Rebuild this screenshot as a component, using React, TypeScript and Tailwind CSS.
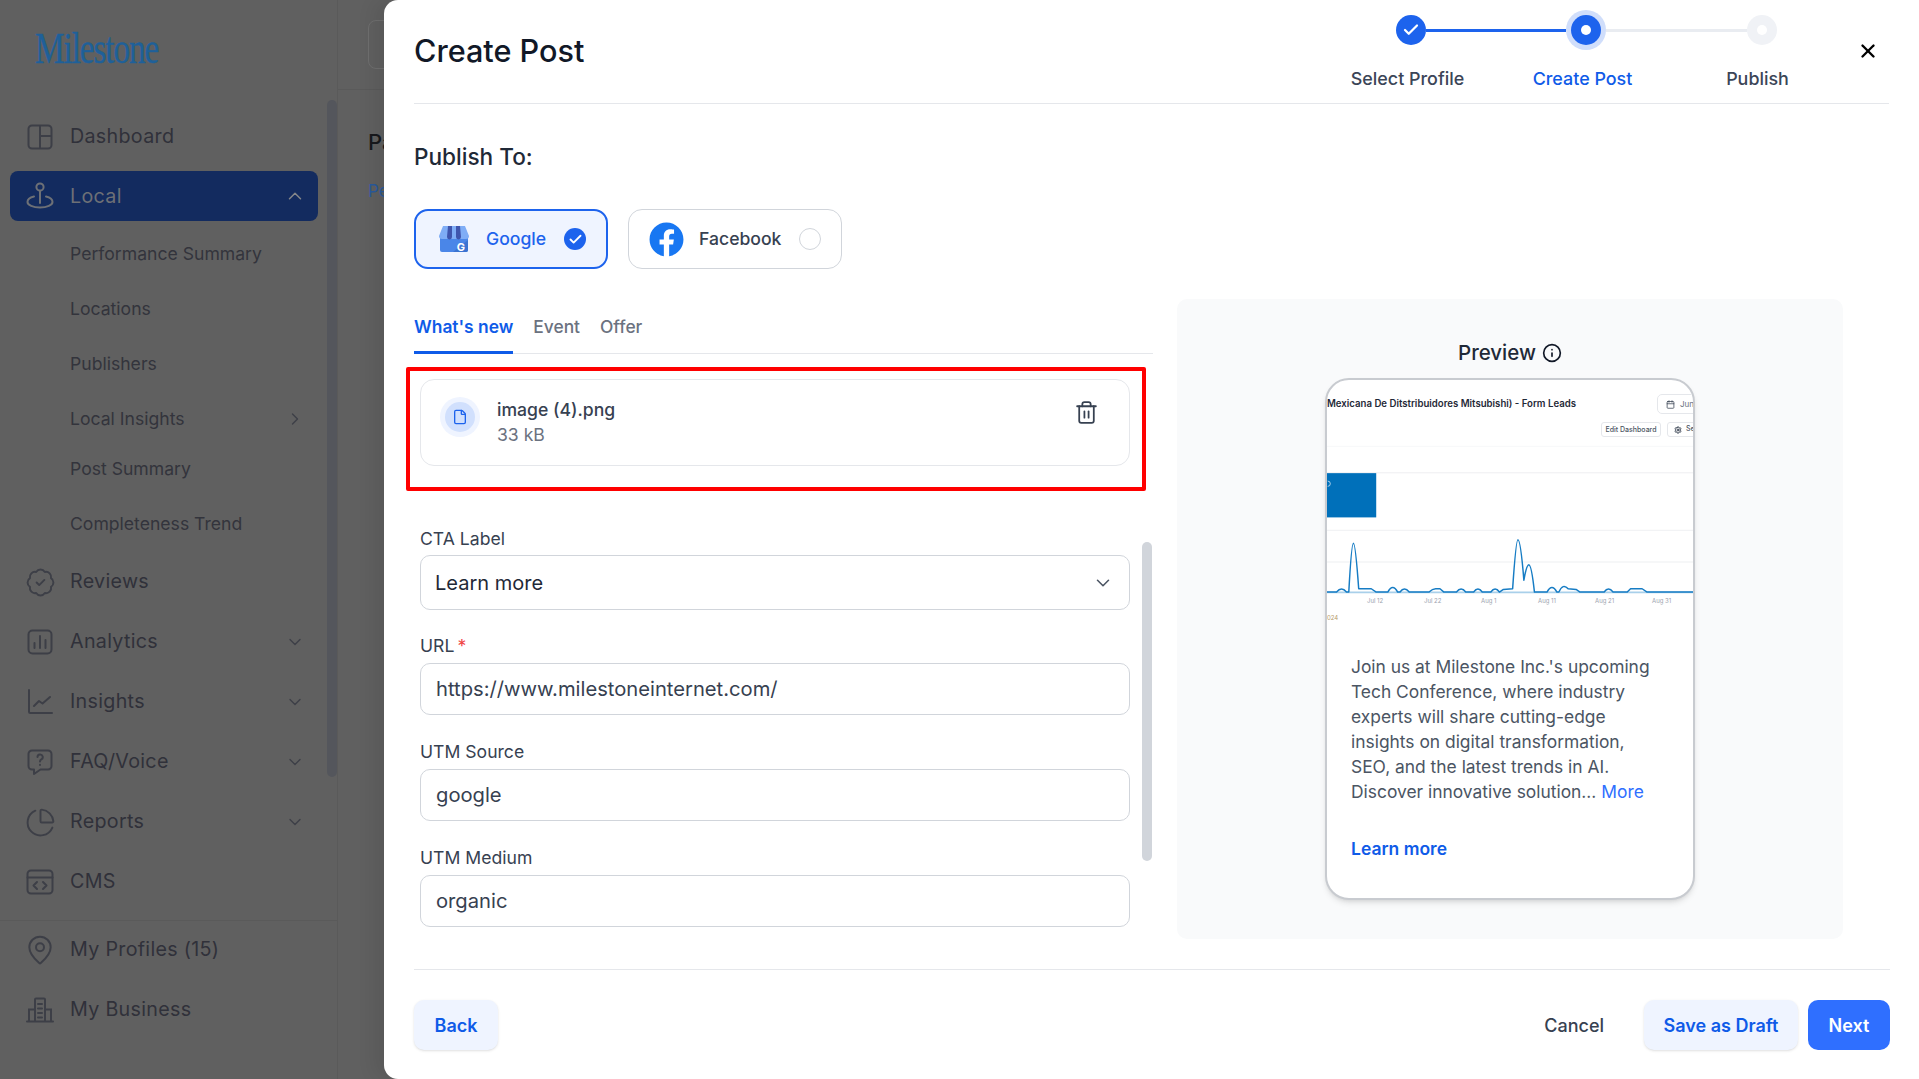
import { BadgeCheck, Calendar, Check, ChevronDown, ChevronRight, ChevronUp, ChartPie, File, Info, MapPin, Settings, Trash2, X } from "lucide-react";
import { FaFacebook } from "react-icons/fa";

const DashboardIcon = () => (
    <svg viewBox="0 0 26 26" className="w-[26px] h-[26px]" fill="none" stroke="currentColor" strokeWidth="2">
        <rect x="1.5" y="1.500" width="23" height="23" rx="3.5" />
        <path d="M13 1.500v23M13 12h11.5" />
    </svg>
);

const LocalIcon = () => (
    <svg viewBox="0 0 28 28" className="w-[28px] h-[28px]" fill="none" stroke="currentColor" strokeWidth="2" strokeLinecap="round">
        <circle cx="14" cy="5" r="3.6" />
        <path d="M14 9v12M8 14.500c-3.800.9-6.500 3-6.500 5.500 0 3 5.500 5.500 12.500 5.500s12.500-2.500 12.500-5.500c0-2.500-2.700-4.600-6.500-5.500" />
    </svg>
);

const AnalyticsIcon = () => (
    <svg viewBox="0 0 26 26" className="w-[26px] h-[26px]" fill="none" stroke="currentColor" strokeWidth="2" strokeLinecap="round">
        <rect x="1.500" y="1.500" width="23" height="23" rx="4" />
        <path d="M7.500 14v5M13 7v12M18.500 11v8" />
    </svg>
);

const InsightsIcon = () => (
    <svg viewBox="0 0 26 26" className="w-[26px] h-[26px]" fill="none" stroke="currentColor" strokeWidth="2" strokeLinecap="round" strokeLinejoin="round">
        <path d="M2 1v21.500c0 .8.500 1.500 1.500 1.500H25" />
        <path d="M7 17l5-5 3.500 2.500L23 8" />
    </svg>
);

const FaqIcon = () => (
    <svg viewBox="0 0 26 26" className="w-[26px] h-[26px]" fill="none" stroke="currentColor" strokeWidth="2" strokeLinecap="round" strokeLinejoin="round">
        <path d="M5 1.500h16a3.500 3.500 0 0 1 3.500 3.500v12a3.500 3.500 0 0 1-3.500 3.500h-7.500L7 25v-4.500H5A3.500 3.500 0 0 1 1.500 17V5A3.500 3.500 0 0 1 5 1.500z" />
        <path d="M10.500 8a2.600 2.600 0 1 1 3.800 2.400c-.9.500-1.300 1-1.300 2M13 15.800v.2" />
    </svg>
);

const CmsIcon = () => (
    <svg viewBox="0 0 28 26" className="w-[28px] h-[26px]" fill="none" stroke="currentColor" strokeWidth="2" strokeLinecap="round" strokeLinejoin="round">
        <rect x="1.500" y="1.500" width="25" height="23" rx="3.500" />
        <path d="M1.500 8.500h25M11 13l-3.500 3.500L11 20M17 13l3.500 3.500L17 20" />
    </svg>
);

const BusinessIcon = () => (
    <svg viewBox="0 0 28 26" className="w-[28px] h-[26px]" fill="none" stroke="currentColor" strokeWidth="2" strokeLinecap="round">
        <path d="M1 24.500h26M3 24.500V12.500h6M25 24.500V12.500h-6M9 24.500V2.500a1 1 0 0 1 1-1h8a1 1 0 0 1 1 1v22" />
        <path d="M12 7h4M12 11.500h4M12 16h4M12 20.500h4" />
    </svg>
);

const GmbIcon = () => (
    <svg viewBox="0 0 32 28" className="w-[32px] h-[28px]">
        <path d="M2 12h28v13a2 2 0 0 1-2 2H4a2 2 0 0 1-2-2z" fill="#4a86e8" />
        <path d="M15 27L30 15v10a2 2 0 0 1-2 2z" fill="#3b73d1" />
        <path d="M5 1h22l4 10a3 3 0 0 1-3 3H4a3 3 0 0 1-3-3z" fill="#7fadf6" />
        <path d="M10 1h4v11a2.500 2.500 0 0 1-5 0zM18 1h4l1 11a2.500 2.500 0 0 1-5 0z" fill="#3f55ad" />
        <text x="23" y="26" textAnchor="middle" fontSize="11" fontWeight="700" fill="#ffffff" fontFamily="Inter, sans-serif">G</text>
    </svg>
);

const mainItems = [
    { label: "Reviews", icon: <BadgeCheck className="w-[31px] h-[31px] shrink-0" strokeWidth={1.5} /> },
    { label: "Analytics", icon: <AnalyticsIcon />, caret: true },
    { label: "Insights", icon: <InsightsIcon />, caret: true },
    { label: "FAQ/Voice", icon: <FaqIcon />, caret: true },
    { label: "Reports", icon: <ChartPie className="w-[31px] h-[31px] shrink-0" strokeWidth={1.5} />, caret: true },
    { label: "CMS", icon: <CmsIcon /> },
];

const subItems = [
    { label: "Performance Summary", h: "h-[55px]" },
    { label: "Locations", h: "h-[55px]" },
    { label: "Publishers", h: "h-[54px]" },
    { label: "Local Insights", h: "h-[56px]", caret: true },
    { label: "Post Summary", h: "h-[44px]" },
    { label: "Completeness Trend", h: "h-[66px]" },
];

const NavRow = ({ icon, label, caret }: { icon: React.ReactNode; label: string; caret?: boolean }) => (
    <div className="h-[50px] flex items-center pl-[26px] pr-[32px] text-[#30313a]">
        <span className="w-[28px] flex justify-center text-[#3d3f47]">{icon}</span>
        <span className="ml-[16px] text-[19.700px] tracking-[0.3px]">{label}</span>
        {caret && <ChevronDown className="ml-auto w-[20px] h-[20px] text-[#3d3f47]" strokeWidth={1.6} />}
    </div>
);

const Sidebar = () => (
    <aside className="relative w-[338px] h-full shrink-0 border-r border-[#5a5a5a] overflow-hidden">
        <div className="h-[90px] pl-[35px] pt-[22px]">
            <span className="block text-[45px] leading-[52px] tracking-[-1.500px] text-[#1f6099] font-['Liberation_Serif',serif] origin-left scale-x-[0.74] [-webkit-text-stroke:0.4px_#1f6099]">Milestone</span>
        </div>
        <div className="pt-[22px]">
            <NavRow icon={<DashboardIcon />} label="Dashboard" />
            <div className="mt-[9px] mx-[10px] w-[308px] h-[50px] rounded-[8px] bg-[#132b5f] flex items-center pl-[16px] pr-[12px] text-[#6d7076]">
                <span className="w-[28px] flex justify-center"><LocalIcon /></span>
                <span className="ml-[16px] pt-[2px] text-[19.700px] tracking-[0.3px]">Local</span>
                <ChevronUp className="ml-auto w-[22px] h-[22px] text-[#85878a]" strokeWidth={1.6} />
            </div>
            <div className="pt-[6px]">
                {subItems.map((s) => (
                    <div key={s.label} className={`${s.h} flex items-center pl-[70px] pr-[32px] text-[17.600px] text-[#33343c]`}>
                        {s.label}
                        {s.caret && <ChevronRight className="ml-auto w-[20px] h-[20px] text-[#3d3f47]" strokeWidth={1.6} />}
                    </div>
                ))}
            </div>
            <div className="flex flex-col gap-[10px]">
                {mainItems.map((m) => (
                    <NavRow key={m.label} icon={m.icon} label={m.label} caret={m.caret} />
                ))}
            </div>
            <div className="mt-[13px] border-t border-[#5a5a5a] pt-[4px] flex flex-col gap-[10px]">
                <NavRow icon={<MapPin className="w-[32px] h-[32px] shrink-0" strokeWidth={1.500} />} label="My Profiles (15)" />
                <NavRow icon={<BusinessIcon />} label="My Business" />
            </div>
        </div>
        {/* sidebar scrollbar */}
        <div className="absolute left-[327px] top-[100px] w-[10px] h-[677px] rounded-full bg-[#54565c]" />
    </aside>
);

const Backdrop = () => (
    <main className="flex-1 h-full">
        <div className="h-[90px] border-b border-[#5a5a5a] pt-[20px] pl-[30px]">
            <div className="w-[60px] h-[49px] rounded-[8px] border border-[#6f6f6f]" />
        </div>
        <div className="pl-[30px] pt-[38px] text-[22px] leading-[28px] font-medium text-[#17181c]">Page</div>
        <div className="pl-[30px] pt-[23px] text-[17px] leading-[24px] text-[#2a5a9c]">Performance</div>
    </main>
);

const Step = ({ state }: { state: "done" | "active" | "todo" }) => {
    if (state === "done")
        return (
            <span className="w-[30px] h-[30px] rounded-full bg-[#1d63ed] flex items-center justify-center">
                <Check className="w-[18px] h-[18px] text-white" strokeWidth={3} />
            </span>
        );
    if (state === "active")
        return (
            <span className="w-[40px] h-[40px] rounded-full bg-[#d0defb] flex items-center justify-center">
                <span className="w-[30px] h-[30px] rounded-full bg-[#1d63ed] flex items-center justify-center">
                    <span className="w-[10px] h-[10px] rounded-full bg-white" />
                </span>
            </span>
        );
    return (
        <span className="w-[30px] h-[30px] rounded-full bg-[#f0f2f6] flex items-center justify-center">
            <span className="w-[10px] h-[10px] rounded-full bg-white" />
        </span>
    );
};

const Header = () => (
    <header className="h-[104px] shrink-0 border-b border-[#e5e7eb] flex">
        <h1 className="pt-[31px] text-[30.600px] leading-[40px] font-medium text-[#111827]">Create Post</h1>
        <div className="ml-auto w-[525px] mr-[12px] pt-[10px]">
            <div className="h-[40px] flex items-center pl-[76px]">
                <Step state="done" />
                <span className="w-[140px] h-[3px] bg-[#1d63ed]" />
                <Step state="active" />
                <span className="w-[141px] h-[3px] bg-[#e9ecf1]" />
                <Step state="todo" />
            </div>
            <div className="mt-[18px] grid grid-cols-3 text-center text-[17.900px] leading-[22px] font-medium text-[#3b4557]">
                <span>Select Profile</span>
                <span className="text-[#0f5be8]">Create Post</span>
                <span>Publish</span>
            </div>
        </div>
        <X className="mt-[40px] mr-[10px] w-[22px] h-[22px] text-black" strokeWidth={2.600} />
    </header>
);

const PublishTo = () => (
    <section className="shrink-0">
        <h2 className="mt-[39px] text-[22.600px] leading-[28px] font-medium text-[#1f2937]">Publish To:</h2>
        <div className="mt-[38px] flex gap-[20px] text-[17.600px] font-medium">
            <div className="w-[194px] h-[60px] rounded-[14px] border-2 border-[#1d63ed] bg-[#eff4ff] flex items-center pl-[22px] text-[#1d63ed]">
                <GmbIcon />
                <span className="ml-[16px]">Google</span>
                <span className="ml-auto mr-[20px] w-[22px] h-[22px] rounded-full bg-[#1d63ed] flex items-center justify-center">
                    <Check className="w-[15px] h-[15px] text-white" strokeWidth={3} />
                </span>
            </div>
            <div className="w-[214px] h-[60px] rounded-[14px] border border-[#d1d5db] flex items-center pl-[20px] text-[#374151]">
                <span className="bg-white rounded-full"><FaFacebook className="w-[35px] h-[35px] text-[#1877f2]" /></span>
                <span className="ml-[15px]">Facebook</span>
                <span className="ml-auto mr-[20px] w-[22px] h-[22px] rounded-full border border-[#d1d5db]" />
            </div>
        </div>
    </section>
);

const labelClass = "block mt-[25px] mb-[5px] h-[24px] text-[17.600px] leading-[24px] text-[#374151]";
const inputClass = "block w-full h-[52px] rounded-[10px] border border-[#d1d5db] px-[15px] pb-[2px] text-[20.200px] text-[#374151] bg-white outline-none";

const Form = () => (
    <div className="relative w-[739px] shrink-0">
        <div className="h-[55px] border-b border-[#e5e7eb] flex gap-[20px] text-[17.400px]">
            <span className="h-[55px] pt-[16px] leading-[24px] border-b-[3px] border-[#0f5be8] font-semibold text-[#0f5be8]">What's new</span>
            <span className="pt-[16px] leading-[24px] font-medium text-[#6b7280]">Event</span>
            <span className="pt-[16px] leading-[24px] font-medium text-[#6b7280]">Offer</span>
        </div>
        <div className="pl-[6px] w-[716px]">
            <div className="mt-[25px] h-[87px] rounded-[14px] border border-[#e5e7eb] flex pl-[19px] pr-[30px]">
                <span className="mt-[17px] w-[40px] h-[40px] rounded-full bg-[#eff4ff] flex items-center justify-center">
                    <span className="w-[30px] h-[30px] rounded-full bg-[#d1e0fd] flex items-center justify-center">
                        <File className="w-[16px] h-[16px] text-[#1d63ed]" strokeWidth={2} />
                    </span>
                </span>
                <div className="ml-[17px] pt-[17px] text-[17.600px] leading-[25px]">
                    <div className="font-medium text-[#374151]">image (4).png</div>
                    <div className="text-[#6b7280]">33 kB</div>
                </div>
                <Trash2 className="ml-auto mt-[20px] w-[25px] h-[25px] text-[#374151]" strokeWidth={1.700} />
            </div>
            <span className="block mt-[61px] mb-[4px] h-[24px] text-[17.600px] leading-[24px] text-[#374151]">CTA Label</span>
            <div className="h-[55px] rounded-[10px] border border-[#d1d5db] flex items-center pl-[14px] pr-[15px] text-[20px] text-[#1f2937]">
                Learn more
                <ChevronDown className="ml-auto w-[22px] h-[22px] text-[#4b5563]" strokeWidth={1.700} />
            </div>
            <label className="block mt-[24px] mb-[5px] h-[24px] text-[17.600px] leading-[24px] text-[#374151]">URL<span className="ml-[3px] text-[#ef4444]">*</span></label>
            <input className={inputClass} readOnly value="https://www.milestoneinternet.com/" />
            <label className={labelClass}>UTM Source</label>
            <input className={inputClass} readOnly value="google" />
            <label className={labelClass}>UTM Medium</label>
            <input className={inputClass} readOnly value="organic" />
        </div>
        {/* form scrollbar */}
        <div className="absolute left-[728px] top-[243px] w-[10px] h-[319px] rounded-full bg-[#d1d5db]" />
        {/* red highlight drawn over the upload card */}
        <div className="absolute left-[-8px] top-[68px] w-[740px] h-[124px] border-4 border-[#ff0000] rounded-[2px]" />
    </div>
);

const PhoneShot = () => (
    <div className="h-[262px] overflow-hidden flex flex-col">
        <div className="h-[65px] pt-[14px] flex items-start justify-end whitespace-nowrap">
            <span className="text-[9.650px] leading-[19px] font-semibold text-[#1f2937] mr-[117px]">n Mexicana De Ditstribuidores Mitsubishi) - Form Leads</span>
        </div>
        <svg viewBox="76 345 1108 480" className="w-full h-[160px] shrink-0" fill="none">
            <path d="M76 347H1184" stroke="#f3f4f6" strokeWidth="2" />
            <path d="M76 427H1184M76 601H1184M76 697H1184" stroke="#e5e7eb" strokeWidth="2" />
            <rect x="76" y="428" width="149" height="134" fill="#0070ba" />
            <path d="M78 452a8 8 0 0 1 0 16" stroke="#ffffff" strokeWidth="2" />
            <path d="M76 789H1184" stroke="#a9d0ea" strokeWidth="5" />
            <path
                d="M76 788L105 788Q120 770 135 788L142 788Q150 640 156 640Q162 640 172 778L210 778L225 788L260 788Q275 760 290 788L297 788Q310 770 325 788L385 788Q395 778 405 778L418 778L430 788L468 788Q482 770 496 788L520 788Q533 770 546 788L572 788Q585 770 598 788L610 780L638 778Q648 630 654 630Q662 630 672 752Q680 705 687 705Q695 705 704 788L742 788Q757 760 772 788L778 788Q790 760 806 778L830 780L842 788L915 788Q928 770 942 788L985 788L995 778L1030 778L1045 788L1184 788"
                stroke="#167cc4"
                strokeWidth="4.500"
                strokeLinejoin="round"
            />
        </svg>
    </div>
);

const Preview = () => (
    <aside className="w-[666px] h-[640px] rounded-[10px] bg-[#f9fafb] flex flex-col items-center">
        <div className="mt-[40px] h-[28px] flex items-center gap-[6px] text-[20.500px] font-medium text-[#1f2937]">
            Preview
            <Info className="w-[20px] h-[20px] text-[#111827]" strokeWidth={2} />
        </div>
        <div className="mt-[11px] w-[370px] h-[522px] rounded-[24px] border-2 border-[#c8cbd0] bg-white shadow-md overflow-hidden">
            <div className="relative">
                <PhoneShot />
                <div className="absolute left-[330px] top-[14px] w-[60px] h-[20px] rounded-[5px] border border-[#e5e7eb] flex items-center gap-[5px] pl-[8px] text-[8px] text-[#6b7280]">
                    <Calendar className="w-[9px] h-[9px] text-[#374151]" />
                    Jun
                </div>
                <div className="absolute left-[274px] top-[42px] w-[60px] h-[15px] rounded-[3px] border border-[#e5e7eb] text-center text-[7px] leading-[13px] font-medium text-[#4b5563]">Edit Dashboard</div>
                <div className="absolute left-[340px] top-[42px] w-[40px] h-[15px] rounded-[3px] border border-[#e5e7eb] flex items-center gap-[4px] pl-[6px] text-[7px] font-medium text-[#4b5563]">
                    <Settings className="w-[8px] h-[8px] text-[#374151]" strokeWidth={3} />
                    Se
                </div>
                <div className="absolute left-[0px] top-[212px] w-full flex text-[6px] leading-[18px] text-[#9ca3af]">
                    <span className="ml-[40px] w-[57px]">Jul 12</span>
                    <span className="w-[57px]">Jul 22</span>
                    <span className="w-[57px]">Aug 1</span>
                    <span className="w-[57px]">Aug 11</span>
                    <span className="w-[57px]">Aug 21</span>
                    <span>Aug 31</span>
                </div>
                <div className="absolute left-0 top-[231px] text-[6px] leading-[14px] text-[#b59a6a]">024</div>
            </div>
            <div className="pl-[24px] pr-[35px] pt-[12px] text-[17.400px] leading-[25px] text-[#4b5563]">
                Join us at Milestone Inc.'s upcoming Tech Conference, where industry experts will share cutting-edge insights on digital transformation, SEO, and the latest trends in AI. Discover innovative solution... <span className="text-[#2f6fff]">More</span>
            </div>
            <div className="pl-[24px] mt-[32px] text-[17.500px] leading-[25px] font-semibold text-[#0f5be8]">Learn more</div>
        </div>
    </aside>
);

const Footer = () => (
    <footer className="mt-[30px] -mr-[1px] border-t border-[#e5e7eb] pt-[30px] flex items-center text-[18px] font-semibold">
        <button className="w-[84px] h-[50px] rounded-[10px] bg-[#eff4ff] text-[#0f5be8] shadow-sm">Back</button>
        <button className="ml-auto mr-[40px] font-medium text-[#374151]">Cancel</button>
        <button className="w-[154px] h-[50px] rounded-[10px] bg-[#eff4ff] text-[#0f5be8] shadow-sm">Save as Draft</button>
        <button className="ml-[10px] w-[82px] h-[50px] rounded-[10px] bg-[#2f6fff] text-white">Next</button>
    </footer>
);

export default function App() {
    return (
        <div className="relative w-[1919px] h-[1079px] overflow-hidden flex bg-[#606060] font-['Inter',sans-serif]">
            <Sidebar />
            <Backdrop />
            {/* drawer sits on top of the dimmed page */}
            <div className="absolute left-[384px] right-0 top-0 bottom-0 bg-white rounded-l-[14px] px-[30px] flex flex-col shadow-[-10px_0_18px_rgba(0,0,0,0.08)]">
                <Header />
                <PublishTo />
                <div className="mt-[30px] flex gap-[24px]">
                    <Form />
                    <Preview />
                </div>
                <Footer />
            </div>
        </div>
    );
}
